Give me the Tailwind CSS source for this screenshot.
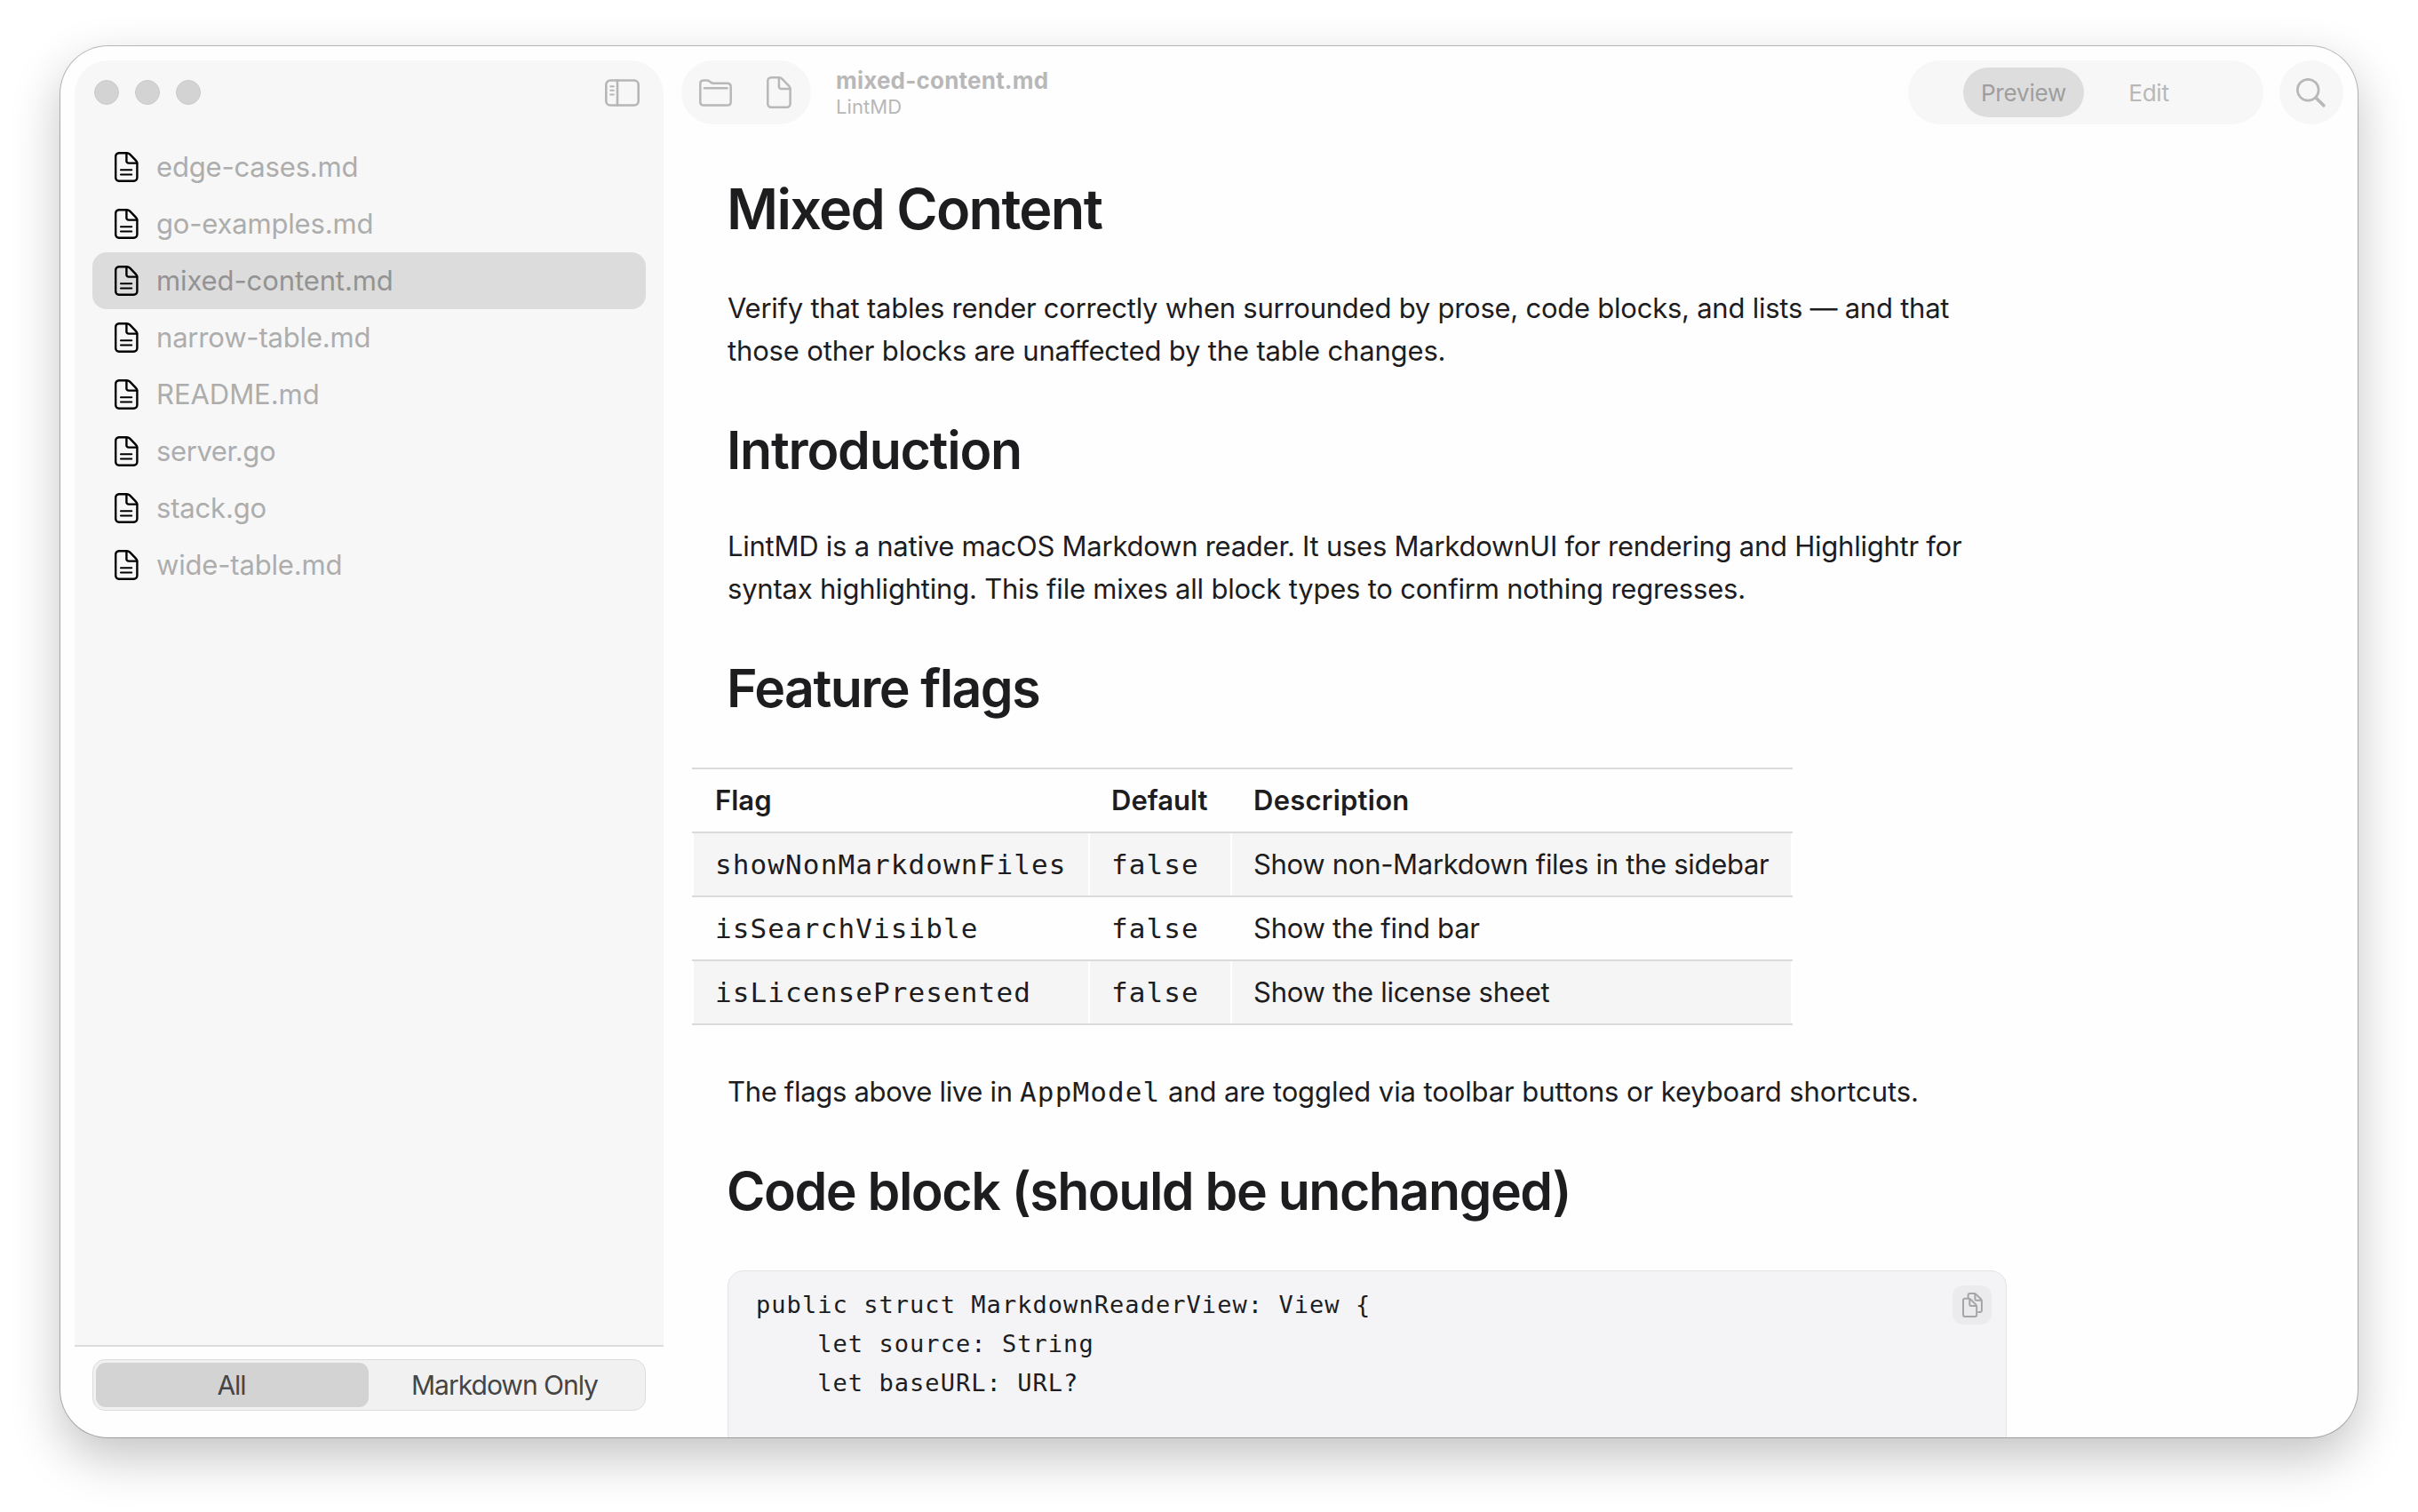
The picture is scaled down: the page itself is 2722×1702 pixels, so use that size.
<!DOCTYPE html>
<html lang="en">
<head>
    <meta charset="UTF-8">
    <title>mixed-content.md - LintMD</title>
    <script src="https://cdn.jsdelivr.net/npm/@tailwindcss/browser@4"></script>
</head>
<body class="w-[2722px] h-[1702px] overflow-hidden bg-white px-[68px] pt-[52px] font-[Inter,'Liberation_Sans',sans-serif] text-[31px] text-[#1d1d1f]">

    <!-- shared file icon -->
    <svg class="hidden">
        <symbol id="file" viewBox="0 0 27 34">
            <g fill="none" stroke="currentColor" stroke-width="2.4" stroke-linecap="round" stroke-linejoin="round">
                <path d="M4.8 1.2H13.6C15.2 1.2 16.2 1.7 17.2 2.7L23.9 9.6C24.9 10.6 25.4 11.6 25.4 13.2V29A3.8 3.8 0 0 1 21.6 32.8H4.8A3.8 3.8 0 0 1 1.2 29V5A3.8 3.8 0 0 1 4.8 1.2Z"/>
                <path d="M13.4 1.5V10.2A2.4 2.4 0 0 0 15.8 12.6H25.2"/>
                <path d="M7 20.2H19.2M7 25.5H19.2" stroke-width="2.1"/>
            </g>
        </symbol>
    </svg>

    <div class="flex w-[2586px] h-[1566px] rounded-[54px] overflow-hidden bg-[#fefefe] shadow-[0_0_0_1px_rgba(0,0,0,0.25),0_22px_56px_rgba(0,0,0,0.24)]">

        <!-- sidebar -->
        <aside class="flex flex-col shrink-0 w-[663px] ml-4 mt-4">
            <div class="flex flex-col h-[1446px] bg-[#f7f7f7] rounded-t-[38px]">
                <div class="flex items-center h-[72px] pl-[22px] pr-[27px]">
                    <div class="flex gap-[18px]">
                        <span class="size-7 rounded-full bg-[#d3d3d3] border border-[#c9c9c9]"></span>
                        <span class="size-7 rounded-full bg-[#d3d3d3] border border-[#c9c9c9]"></span>
                        <span class="size-7 rounded-full bg-[#d3d3d3] border border-[#c9c9c9]"></span>
                    </div>
                    <svg class="ml-auto w-[39px] h-[31px] text-[#b6b6b6]" viewBox="0 0 39 31" fill="none" stroke="currentColor" stroke-width="2.6" stroke-linecap="round">
                        <rect x="1.3" y="1.5" width="36.4" height="28" rx="4.8"/>
                        <path d="M14 1.5V29.5"/>
                        <path d="M6.2 8.2H9.8M6.2 12.8H9.8M6.2 17.4H9.8" stroke-width="2"/>
                    </svg>
                </div>

                <ul class="mx-5 mt-4 text-[#adadad] tracking-[-0.18px]">
                    <li class="flex items-center gap-5 h-16 pl-[25px] rounded-2xl"><svg class="w-[27px] h-[34px] text-black"><use href="#file"/></svg>edge-cases.md</li>
                    <li class="flex items-center gap-5 h-16 pl-[25px] rounded-2xl"><svg class="w-[27px] h-[34px] text-black"><use href="#file"/></svg>go-examples.md</li>
                    <li class="flex items-center gap-5 h-16 pl-[25px] rounded-2xl bg-[#dcdcdc] text-[#939393] tracking-[-0.1px]"><svg class="w-[27px] h-[34px] text-black"><use href="#file"/></svg>mixed-content.md</li>
                    <li class="flex items-center gap-5 h-16 pl-[25px] rounded-2xl"><svg class="w-[27px] h-[34px] text-black"><use href="#file"/></svg>narrow-table.md</li>
                    <li class="flex items-center gap-5 h-16 pl-[25px] rounded-2xl tracking-[-0.05px]"><svg class="w-[27px] h-[34px] text-black"><use href="#file"/></svg>README.md</li>
                    <li class="flex items-center gap-5 h-16 pl-[25px] rounded-2xl tracking-[-0.4px]"><svg class="w-[27px] h-[34px] text-black"><use href="#file"/></svg>server.go</li>
                    <li class="flex items-center gap-5 h-16 pl-[25px] rounded-2xl"><svg class="w-[27px] h-[34px] text-black"><use href="#file"/></svg>stack.go</li>
                    <li class="flex items-center gap-5 h-16 pl-[25px] rounded-2xl"><svg class="w-[27px] h-[34px] text-black"><use href="#file"/></svg>wide-table.md</li>
                </ul>
            </div>

            <!-- file filter -->
            <div class="border-t-2 border-[#dcdcdc] pt-3.5 px-5">
                <div class="flex h-[58px] p-[3px] rounded-[14px] border border-[#dcdcdc] bg-[#f1f1f1] text-[30px] tracking-[-1px] text-[#454545]">
                    <div class="flex items-center justify-center w-[307px] pr-0.5 rounded-[11px] bg-[#d3d3d3]">All</div>
                    <div class="flex items-center justify-center flex-1 pr-0.5">Markdown Only</div>
                </div>
            </div>
        </aside>

        <!-- reader -->
        <main class="flex-1 min-w-0">
            <header class="flex h-[88px] pt-4 pl-5 pr-4 text-[26px] text-[#b8b8b8]">
                <div class="flex items-center w-[146px] h-[72px] pl-5 rounded-full bg-[#f7f7f7]">
                    <svg class="w-[37px] h-[31px]" viewBox="0 0 37 31" fill="none" stroke="currentColor" stroke-width="2.5" stroke-linecap="round" stroke-linejoin="round">
                        <path d="M1.3 25.4V5.4C1.3 2.9 2.7 1.6 5.1 1.6H8.7C10.2 1.6 10.9 1.9 11.9 2.7L13.3 3.8C14.2 4.5 14.9 4.8 16.3 4.8H31.6C34.2 4.8 35.7 6.2 35.7 8.8V25.4C35.7 28.1 34.3 29.5 31.8 29.5H5.2C2.7 29.5 1.3 28.1 1.3 25.4Z"/>
                        <path d="M6 10.2H31.5"/>
                    </svg>
                    <svg class="ml-[39px] w-7 h-9" viewBox="0 0 28 36" fill="none" stroke="currentColor" stroke-width="2.5" stroke-linecap="round" stroke-linejoin="round">
                        <path d="M5 1.3H13.8C15.4 1.3 16.4 1.7 17.5 2.8L25 10.6C26.1 11.7 26.6 12.6 26.6 14.3V30.8A3.9 3.9 0 0 1 22.7 34.7H5A3.8 3.8 0 0 1 1.3 30.8V5.2A3.8 3.8 0 0 1 5 1.3Z"/>
                        <path d="M13.9 1.6V11.4A2.7 2.7 0 0 0 16.6 14.1H26.4"/>
                    </svg>
                </div>
                <div class="ml-7 pt-1.5">
                    <div class="font-bold leading-[34px] tracking-[0.2px]">mixed-content.md</div>
                    <div class="text-[22px] leading-6 tracking-[0.1px]">LintMD</div>
                </div>
                <div class="flex items-center gap-1.5 w-[400px] h-[72px] ml-auto pl-[62px] rounded-full bg-[#f7f7f7]">
                    <div class="flex items-center justify-center w-[136px] h-14 rounded-full bg-[#dddddd] text-[#9e9e9e] tracking-[-0.2px]">Preview</div>
                    <div class="flex items-center justify-center w-[136px] h-14 pr-0.5 tracking-[-0.2px]">Edit</div>
                </div>
                <div class="flex items-center justify-center size-[72px] ml-[18px] pr-0.5 rounded-full bg-[#f7f7f7]">
                    <svg class="size-[33px]" viewBox="0 0 33 33" fill="none" stroke="currentColor" stroke-linecap="round">
                        <circle cx="13.2" cy="13.2" r="11.9" stroke-width="2.7"/>
                        <path d="M22.3 22.3L30.8 30.8" stroke-width="3.6"/>
                    </svg>
                </div>
            </header>

            <article class="pl-[72px] pt-[59px] leading-[48px]">
                <h1 class="-ml-px text-[63px] leading-[72px] font-semibold tracking-[-1.72px]">Mixed Content</h1>
                <p class="mt-[52px] whitespace-nowrap">
                    <span class="block tracking-[-0.245px]">Verify that tables render correctly when surrounded by prose, code blocks, and lists — and that</span>
                    <span class="block tracking-[-0.16px]">those other blocks are unaffected by the table changes.</span>
                </p>

                <h2 class="-ml-px mt-[51px] text-[59px] leading-[73px] font-semibold tracking-[-1.25px]">Introduction</h2>
                <p class="mt-12 whitespace-nowrap">
                    <span class="block tracking-[-0.25px]">LintMD is a native macOS Markdown reader. It uses MarkdownUI for rendering and Highlightr for</span>
                    <span class="block tracking-[-0.21px]">syntax highlighting. This file mixes all block types to confirm nothing regresses.</span>
                </p>

                <h2 class="-ml-px mt-[51px] text-[59px] leading-[73px] font-semibold tracking-[-1.58px]">Feature flags</h2>
                <div class="w-[1239px] -ml-10 mt-[53px] border-t-2 border-[#dadada] leading-[70px]">
                    <div class="grid grid-cols-[446px_160px_1fr] h-[72px] border-b-2 border-[#dadada] font-semibold">
                        <div class="pl-[26px]">Flag</div>
                        <div class="pl-[26px]">Default</div>
                        <div class="pl-[26px] tracking-[0.25px]">Description</div>
                    </div>
                    <div class="grid grid-cols-[446px_160px_1fr] h-[72px] border-b-2 border-[#dadada]">
                        <div class="pl-6 border-l-2 border-white bg-[#f5f5f5] font-['DejaVu_Sans_Mono',monospace] tracking-[1.11px]">showNonMarkdownFiles</div>
                        <div class="pl-6 border-l-2 border-white bg-[#f5f5f5] font-['DejaVu_Sans_Mono',monospace] tracking-[1.11px]">false</div>
                        <div class="pl-6 border-x-2 border-white bg-[#f5f5f5] tracking-[-0.3px]">Show non-Markdown files in the sidebar</div>
                    </div>
                    <div class="grid grid-cols-[446px_160px_1fr] h-[72px] border-b-2 border-[#dadada]">
                        <div class="pl-[26px] font-['DejaVu_Sans_Mono',monospace] tracking-[1.11px]">isSearchVisible</div>
                        <div class="pl-[26px] font-['DejaVu_Sans_Mono',monospace] tracking-[1.11px]">false</div>
                        <div class="pl-[26px] tracking-[-0.25px]">Show the find bar</div>
                    </div>
                    <div class="grid grid-cols-[446px_160px_1fr] h-[72px] border-b-2 border-[#dadada]">
                        <div class="pl-6 border-l-2 border-white bg-[#f5f5f5] font-['DejaVu_Sans_Mono',monospace] tracking-[1.11px]">isLicensePresented</div>
                        <div class="pl-6 border-l-2 border-white bg-[#f5f5f5] font-['DejaVu_Sans_Mono',monospace] tracking-[1.11px]">false</div>
                        <div class="pl-6 border-x-2 border-white bg-[#f5f5f5] tracking-[-0.25px]">Show the license sheet</div>
                    </div>
                </div>
                <p class="mt-[51px] h-12 whitespace-nowrap tracking-[-0.1px]"><span class="tracking-[-0.32px]">The flags above live in </span><code class="font-['DejaVu_Sans_Mono',monospace] leading-none tracking-[1.11px]">AppModel</code> and are toggled via toolbar buttons or keyboard shortcuts.</p>

                <h2 class="-ml-px mt-[51px] text-[59px] leading-[73px] font-semibold tracking-[-1.48px]">Code block (should be unchanged)</h2>
                <div class="flex items-start justify-between w-[1440px] h-[240px] mt-[53px] pt-4 pl-[31px] pr-4 rounded-[18px] border border-[#e3e3e5] bg-[#f4f4f6]">
<pre class="font-['DejaVu_Sans_Mono',monospace] text-[27px] leading-[44px] tracking-[1.05px]">public struct MarkdownReaderView: View {
    let source: String
    let baseURL: URL?
</pre>
                    <div class="flex items-center justify-center size-11 rounded-xl bg-[#ebebed]">
                        <svg class="w-[23px] h-7 text-[#a5a5a6]" viewBox="0 0 23 28" fill="none" stroke="currentColor" stroke-width="2" stroke-linejoin="round">
                            <path d="M6.6 6V3.3C6.6 1.8 7.4 1 8.8 1H13.2C14.2 1 14.8 1.3 15.4 1.9L20.9 7.3C21.6 8 21.9 8.5 21.9 9.5V19.8C21.9 21.3 21.1 22.1 19.7 22.1H17.4"/>
                            <path d="M14.4 1.2V7.2C14.4 8.2 14.9 8.7 15.8 8.7H21.8"/>
                            <path d="M3.1 6.7H7.1C8.1 6.7 8.7 7 9.4 7.7L15.1 13.4C15.9 14.2 16.2 14.8 16.2 15.8V25C16.2 26.4 15.5 27.1 14.1 27.1H3.1C1.7 27.1 1 26.4 1 25V8.8C1 7.4 1.7 6.7 3.1 6.7Z"/>
                            <path d="M8.3 6.9V13.4C8.3 14.4 8.8 14.9 9.7 14.9H16"/>
                        </svg>
                    </div>
                </div>
            </article>
        </main>
    </div>
</body>
</html>
